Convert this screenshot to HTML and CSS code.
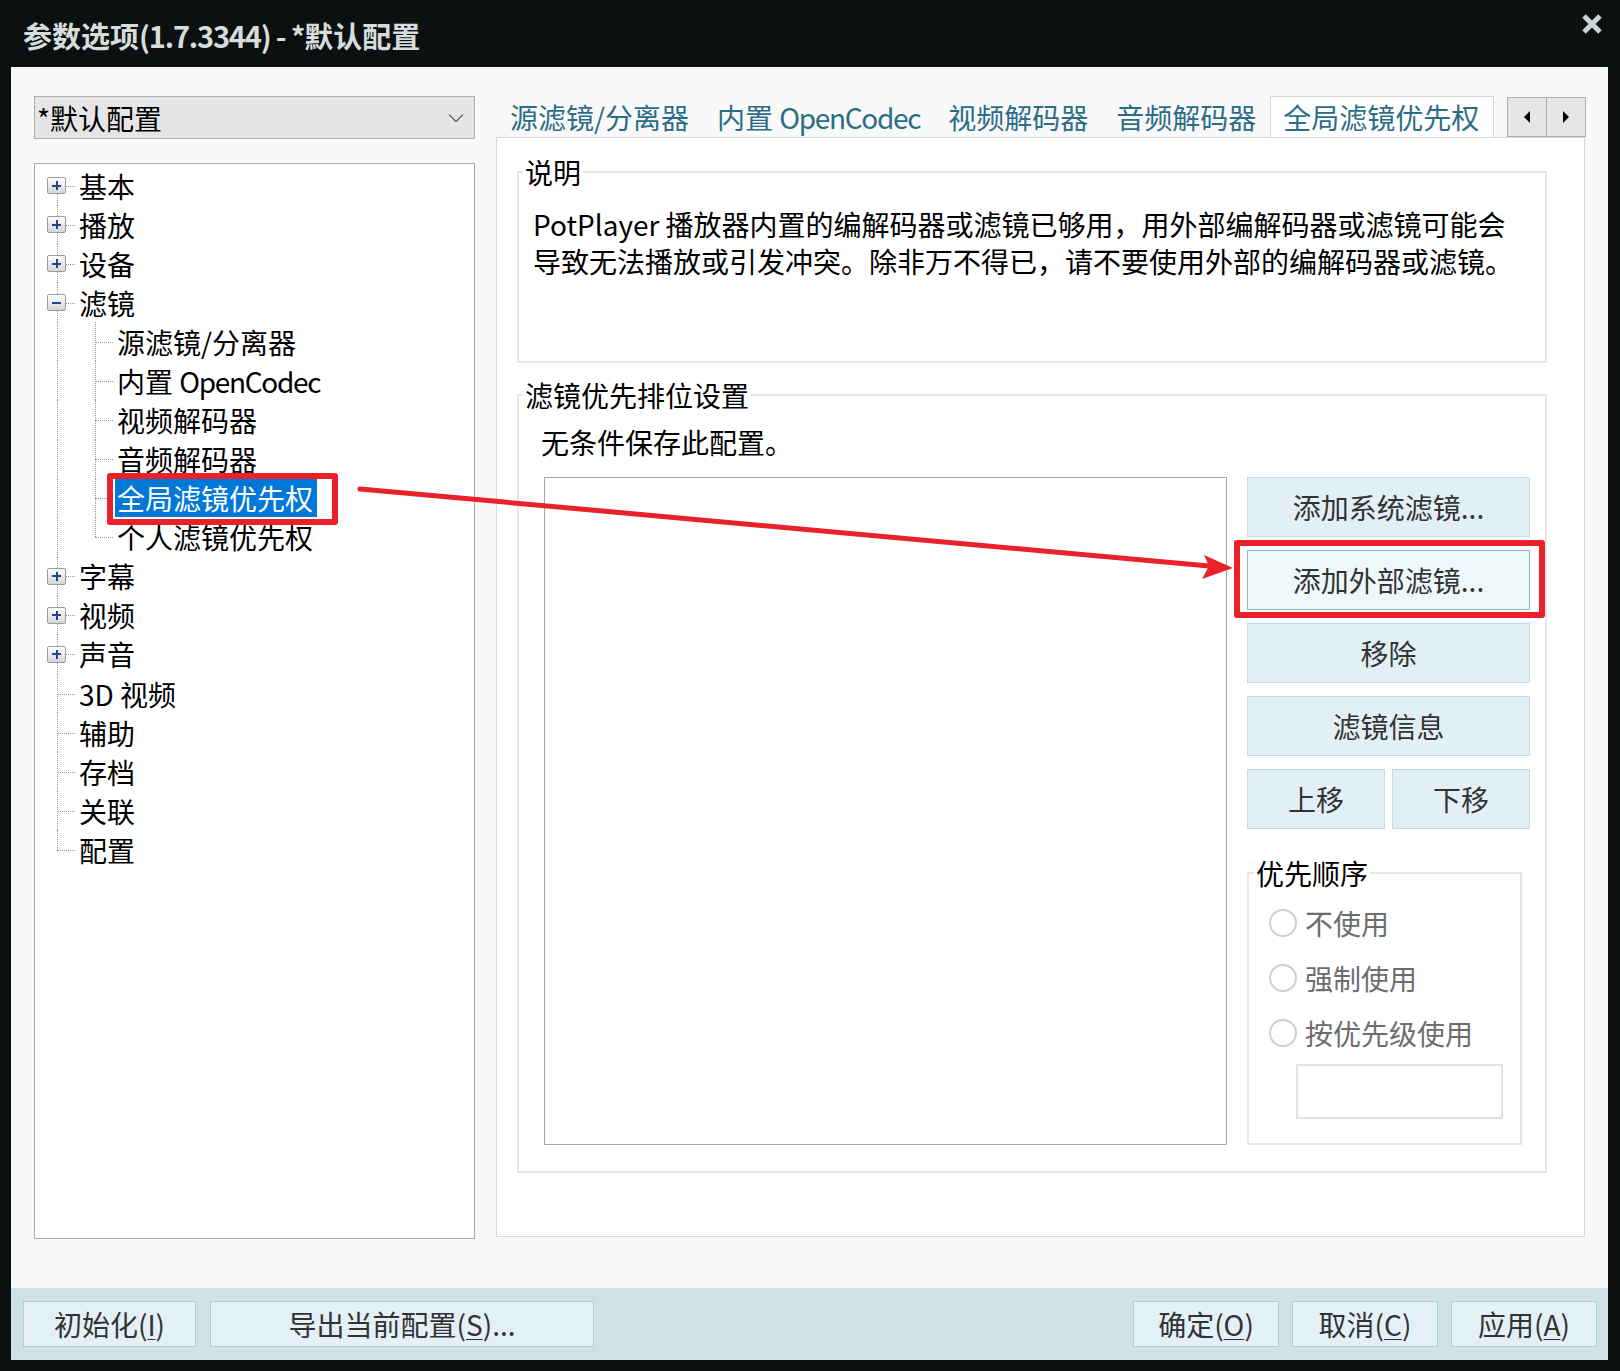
FILE: index.html
```html
<!DOCTYPE html>
<html lang="zh-CN">
<head>
<meta charset="utf-8">
<title>参数选项</title>
<link rel="stylesheet" href="styles.css">
</head>
<body>
<div class="titlebar">
  <span class="title">参数选项<span class="tlat">(1.7.3344) - *</span>默认配置</span>
  <svg class="close" width="22" height="22" viewBox="0 0 22 22"><path d="M3 3 L19 19 M19 3 L3 19" stroke="#c8d3d3" stroke-width="5"/></svg>
</div>

<div class="window">
  <div class="main">
    <div class="left">
      <div class="combo">
        <span>*默认配置</span>
        <svg width="16" height="10" viewBox="0 0 16 10"><path d="M1 1.5 L8 8.5 L15 1.5" fill="none" stroke="#6a6a6a" stroke-width="1.4"/></svg>
      </div>
      <div class="tree">
        <div class="row first"><div class="c1"><span class="exp"></span></div><span class="lbl">基本</span></div>
        <div class="row"><div class="c1"><span class="exp"></span></div><span class="lbl">播放</span></div>
        <div class="row"><div class="c1"><span class="exp"></span></div><span class="lbl">设备</span></div>
        <div class="row"><div class="c1"><span class="exp minus"></span></div><span class="lbl">滤镜</span></div>
        <div class="row child"><div class="c1"></div><div class="c2"></div><span class="lbl">源滤镜/分离器</span></div>
        <div class="row child"><div class="c1"></div><div class="c2"></div><span class="lbl">内置 <span class="lat">OpenCodec</span></span></div>
        <div class="row child"><div class="c1"></div><div class="c2"></div><span class="lbl">视频解码器</span></div>
        <div class="row child"><div class="c1"></div><div class="c2"></div><span class="lbl">音频解码器</span></div>
        <div class="row child"><div class="c1"></div><div class="c2"></div><span class="lbl sel">全局滤镜优先权</span></div>
        <div class="row child lastchild"><div class="c1"></div><div class="c2"></div><span class="lbl">个人滤镜优先权</span></div>
        <div class="row"><div class="c1"><span class="exp"></span></div><span class="lbl">字幕</span></div>
        <div class="row"><div class="c1"><span class="exp"></span></div><span class="lbl">视频</span></div>
        <div class="row"><div class="c1"><span class="exp"></span></div><span class="lbl">声音</span></div>
        <div class="row"><div class="c1"></div><span class="lbl">3D 视频</span></div>
        <div class="row"><div class="c1"></div><span class="lbl">辅助</span></div>
        <div class="row"><div class="c1"></div><span class="lbl">存档</span></div>
        <div class="row"><div class="c1"></div><span class="lbl">关联</span></div>
        <div class="row last"><div class="c1"></div><span class="lbl">配置</span></div>
      </div>
    </div>

    <div class="right">
      <div class="tabstrip">
        <div class="tabs">
          <div class="tab">源滤镜/分离器</div>
          <div class="tab">内置 <span class="lat">OpenCodec</span></div>
          <div class="tab">视频解码器</div>
          <div class="tab">音频解码器</div>
          <div class="tab active">全局滤镜优先权</div>
          <div class="tab">个人滤镜优先权</div>
        </div>
        <div class="spin">
          <div class="spin-btn"><svg width="8" height="12" viewBox="0 0 8 12"><path d="M7 0 L1 6 L7 12 Z" fill="#000"/></svg></div>
          <div class="spin-btn"><svg width="8" height="12" viewBox="0 0 8 12"><path d="M1 0 L7 6 L1 12 Z" fill="#000"/></svg></div>
        </div>
      </div>

      <div class="panel">
        <fieldset class="group desc">
          <legend>说明</legend>
          <p class="desc-text">PotPlayer 播放器内置的编解码器或滤镜已够用，用外部编解码器或滤镜可能会<br>导致无法播放或引发冲突。除非万不得已，请不要使用外部的编解码器或滤镜。</p>
        </fieldset>

        <fieldset class="group prio">
          <legend>滤镜优先排位设置</legend>
          <div class="prio-body">
            <div class="note">无条件保存此配置。</div>
            <div class="prio-row">
              <div class="list"></div>
              <div class="side">
                <div class="btn">添加系统滤镜...</div>
                <div class="btn hot">添加外部滤镜...</div>
                <div class="btn">移除</div>
                <div class="btn">滤镜信息</div>
                <div class="btn-pair">
                  <div class="btn">上移</div>
                  <div class="btn">下移</div>
                </div>
                <fieldset class="group order">
                  <legend>优先顺序</legend>
                  <div class="order-body">
                    <label class="radio"><span class="circle"></span>不使用</label>
                    <label class="radio"><span class="circle"></span>强制使用</label>
                    <label class="radio"><span class="circle"></span>按优先级使用</label>
                    <div class="num"></div>
                  </div>
                </fieldset>
              </div>
            </div>
          </div>
        </fieldset>
      </div>
    </div>
  </div>

  <div class="bottombar">
    <div class="bgroup">
      <div class="bbtn w-init">初始化(<span class="u">I</span>)</div>
      <div class="bbtn w-export">导出当前配置(<span class="u">S</span>)...</div>
    </div>
    <div class="bgroup">
      <div class="bbtn w-std">确定(<span class="u">O</span>)</div>
      <div class="bbtn w-std">取消(<span class="u">C</span>)</div>
      <div class="bbtn w-std">应用(<span class="u">A</span>)</div>
    </div>
  </div>
</div>

<div class="mark mark-sel"></div>
<div class="mark mark-btn"></div>
<svg class="arrow" width="1620" height="1371" viewBox="0 0 1620 1371">
  <line x1="360" y1="489" x2="1209" y2="566" stroke="#e8212b" stroke-width="5" stroke-linecap="round"/>
  <polygon points="1233,568 1204,555 1209,566 1202,579" fill="#e8212b"/>
</svg>
</body>
</html>
```

FILE: styles.css
```css
html, body {
  margin: 0;
  padding: 0;
}

body {
  width: 1620px;
  height: 1371px;
  overflow: hidden;
  position: relative;
  background: #0c1010;
  font-family: "Noto Sans CJK SC", "Noto Sans", sans-serif;
  font-size: 28px;
  color: #000;
}

.lat {
  letter-spacing: -1.3px;
}

/* ---------- title bar ---------- */
.titlebar {
  height: 67px;
  box-sizing: border-box;
  display: flex;
  justify-content: space-between;
  align-items: center;
  padding: 0 17px 0 23px;
}

.title {
  font-size: 29px;
  font-weight: 700;
  line-height: 1;
  color: #d7dddd;
  padding-top: 3px;
  white-space: nowrap;
}

.tlat {
  letter-spacing: -1.2px;
}

.close {
  align-self: flex-start;
  margin-top: 13px;
}

/* ---------- window ---------- */
.window {
  margin-left: 11px;
  width: 1597px;
  height: 1293px;
  background: #f9f9f9;
  display: flex;
  flex-direction: column;
}

.main {
  flex: 1;
  display: flex;
  padding: 29px 0 0 23px;
}

.left {
  width: 441px;
  display: flex;
  flex-direction: column;
}

.combo {
  height: 43px;
  box-sizing: border-box;
  border: 1px solid #adadad;
  background: #e5e5e5;
  display: flex;
  align-items: center;
  justify-content: space-between;
  padding: 0 10px 0 2px;
  line-height: 1;
}

.tree {
  margin-top: 24px;
  height: 1076px;
  box-sizing: border-box;
  border: 1px solid #aaaaaa;
  background: #fff;
  padding-top: 2px;
}

.row {
  display: flex;
  align-items: center;
  height: 39.08px;
}

.c1, .c2 {
  flex: none;
  height: 100%;
  position: relative;
  display: flex;
  align-items: center;
  box-sizing: border-box;
}

.c1 {
  width: 42px;
  padding-left: 12px;
}

.c2 {
  width: 38px;
}

.c1::before, .c2::before {
  content: "";
  position: absolute;
  top: 0;
  bottom: 0;
  border-left: 1px dotted #9a9a9a;
}

.c1::after, .c2::after {
  content: "";
  position: absolute;
  top: 50%;
  right: 2px;
  border-top: 1px dotted #9a9a9a;
}

.c1::before, .c1::after { left: 22px; }
.c2::before, .c2::after { left: 18px; }

.row.first .c1::before { top: 50%; }
.row.last .c1::before { bottom: 50%; }
.row.child .c1::after { display: none; }
.row.lastchild .c2::before { bottom: 50%; }

.exp {
  position: relative;
  z-index: 1;
  width: 19px;
  height: 17px;
  box-sizing: border-box;
  border: 1px solid #9c9c9c;
  border-radius: 2px;
  background: linear-gradient(#fefefe, #d6d6d6);
  display: grid;
  place-items: center;
}

.exp::before, .exp::after {
  content: "";
  grid-area: 1 / 1;
  background: #27438f;
}

.exp::before { width: 9px; height: 2px; }
.exp::after { width: 2px; height: 9px; }
.exp.minus::after { display: none; }

.lbl {
  padding: 0 4px 0 2px;
  line-height: 38px;
  white-space: nowrap;
}

.lbl.sel {
  background: #0078d7;
  color: #fff;
}

/* ---------- right side ---------- */
.right {
  margin-left: 21px;
  width: 1090px;
  display: flex;
  flex-direction: column;
}

.tabstrip {
  height: 41px;
  display: flex;
  align-items: flex-end;
}

.tabs {
  flex: 1;
  min-width: 0;
  height: 41px;
  display: flex;
  align-items: flex-end;
  overflow: hidden;
}

.tab {
  flex: none;
  height: 40px;
  line-height: 40px;
  padding: 0 14px;
  color: #2b6d86;
  white-space: nowrap;
}

.tab.active {
  position: relative;
  z-index: 2;
  height: 41px;
  margin-bottom: -1px;
  padding: 0 14px 0 12px;
  border: 1px solid #d6d6d6;
  border-bottom: none;
  background: #fff;
  line-height: 41px;
}

.spin {
  flex: none;
  width: 79px;
  height: 40px;
  box-sizing: border-box;
  border: 1px solid #adadad;
  background: #e6e6e6;
  display: flex;
}

.spin-btn {
  flex: 1;
  display: flex;
  align-items: center;
  justify-content: center;
}

.spin-btn + .spin-btn {
  border-left: 1px solid #adadad;
}

.panel {
  height: 1100px;
  margin-right: 1px;
  box-sizing: border-box;
  border: 1px solid #d9d9d9;
  background: #fff;
  padding: 16px 37px 0 20px;
}

.group {
  margin: 0;
  padding: 0;
  min-width: 0;
  box-sizing: border-box;
  border: 2px solid #e6e6e6;
}

.group legend {
  padding: 0 2px;
  margin-left: 4px;
  line-height: 36px;
  white-space: nowrap;
}

.desc {
  height: 209px;
}

.desc-text {
  margin: 0;
  padding: 16px 0 0 14px;
  line-height: 37px;
  white-space: nowrap;
}

.prio {
  margin-top: 14px;
  height: 796px;
  display: flex;
  flex-direction: column;
}

.prio-body {
  flex: 1;
  display: flex;
  flex-direction: column;
  padding: 0 15px 26px 22px;
}

.note {
  margin-top: 11px;
  line-height: 36px;
}

.prio-row {
  flex: 1;
  margin-top: 17px;
  display: flex;
  gap: 20px;
}

.list {
  flex: 1;
  margin-left: 3px;
  border: 1px solid #a8a8a8;
  background: #fff;
}

.side {
  width: 283px;
  display: flex;
  flex-direction: column;
  gap: 13px;
}

.btn {
  height: 60px;
  box-sizing: border-box;
  border: 1px solid #c0dde7;
  background: #e2f0f6;
  color: #333;
  display: flex;
  align-items: center;
  justify-content: center;
  line-height: 1;
  white-space: nowrap;
}

.btn.hot {
  background: #eef8fb;
  border-color: #8db6c3;
}

.btn-pair {
  display: flex;
  gap: 7px;
}

.btn-pair .btn {
  flex: 1;
}

.order {
  flex: 1;
  margin: 13px 8px 0 0;
  display: flex;
  flex-direction: column;
}

.order legend {
  margin-left: 5px;
}

.order-body {
  flex: 1;
  padding: 4px 0 0 20px;
  display: flex;
  flex-direction: column;
}

.radio {
  height: 55px;
  display: flex;
  align-items: center;
  gap: 8px;
  color: #6d6d6d;
  line-height: 1;
}

.circle {
  width: 28px;
  height: 28px;
  box-sizing: border-box;
  border: 2px solid #cfcfcf;
  border-radius: 50%;
  background: #fff;
}

.num {
  margin: 4px 0 0 27px;
  width: 207px;
  height: 55px;
  box-sizing: border-box;
  border: 2px solid #e2e2e2;
  background: #fff;
}

/* ---------- bottom bar ---------- */
.bottombar {
  height: 72px;
  box-sizing: border-box;
  background: #cde1e7;
  display: flex;
  justify-content: space-between;
  align-items: center;
  padding: 0 11px 0 12px;
}

.bgroup {
  display: flex;
  gap: 13px;
}

.bgroup:first-child {
  gap: 14px;
}

.bbtn {
  height: 46px;
  box-sizing: border-box;
  border: 1px solid #a9cfd9;
  background: #e3f1f7;
  color: #333;
  display: flex;
  align-items: center;
  justify-content: center;
  line-height: 1;
  white-space: nowrap;
}

.w-init { width: 173px; }
.w-export { width: 384px; }
.w-std { width: 146px; }

.u {
  text-decoration: underline;
  text-underline-offset: 3px;
  text-decoration-thickness: 1px;
}

/* ---------- annotations (overlay) ---------- */
.mark {
  position: absolute;
  box-sizing: border-box;
  border: 6px solid #e8212b;
  border-radius: 3px;
}

.mark-sel {
  left: 107px;
  top: 473px;
  width: 231px;
  height: 52px;
}

.mark-btn {
  left: 1234px;
  top: 540px;
  width: 311px;
  height: 78px;
}

.arrow {
  position: absolute;
  left: 0;
  top: 0;
  pointer-events: none;
}
```
